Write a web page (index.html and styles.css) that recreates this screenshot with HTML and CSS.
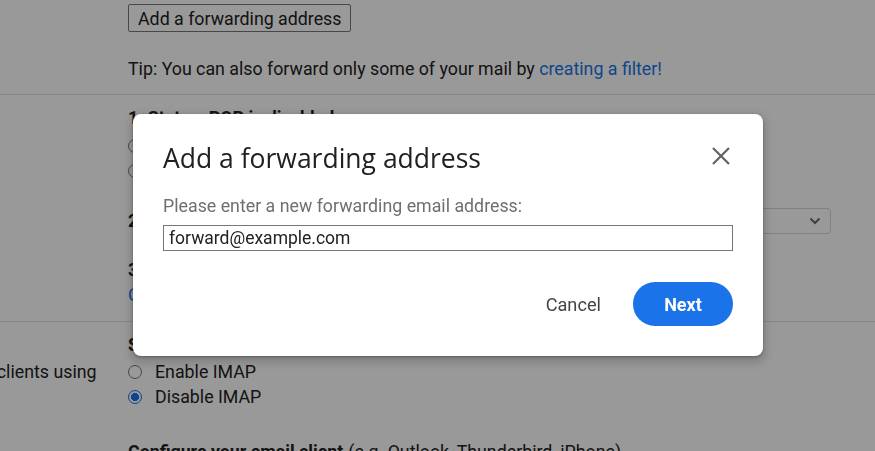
FILE: index.html
```html
<!DOCTYPE html>
<html lang="en">
<head>
  <meta charset="UTF-8">
  <meta name="viewport" content="width=device-width, initial-scale=1.0">
  <title>Forwarding and POP/IMAP</title>
  <link rel="stylesheet" href="styles.css">
</head>
<body>
  <div class="settings">
    <div class="row forward">
      <div class="label"><b>Forwarding:</b></div>
      <div class="value">
        <button class="plain-btn">Add a forwarding address</button>
        <p class="tip">Tip: You can also forward only some of your mail by <a href="#">creating a filter!</a></p>
      </div>
    </div>

    <div class="row pop">
      <div class="label"><b>POP download:</b></div>
      <div class="value">
        <div class="line"><b>1. Status: POP is disabled</b></div>
        <label class="line radio-line first"><span class="radio"></span>Enable POP for all mail</label>
        <label class="line radio-line"><span class="radio"></span>Enable POP for mail that arrives from now on</label>
        <div class="line gap-lg select-line">
          <span><b>2. When messages are accessed with POP</b></span>
          <div class="select">
            <span>keep Gmail's copy in the Inbox</span>
            <svg width="14" height="14" viewBox="0 0 14 14"><path d="M2.5 4.5 7 9l4.5-4.5" fill="none" stroke="#6b6b6b" stroke-width="2"/></svg>
          </div>
        </div>
        <div class="line gap-md"><b>3. Configure your email client</b> (e.g. Outlook, Eudora, Netscape Mail)</div>
        <div class="line"><a href="#">Configuration instructions</a></div>
      </div>
    </div>

    <div class="row imap">
      <div class="label">
        <div class="line"><b>IMAP access:</b></div>
        <div class="line">(access Gmail from other clients using</div>
        <div class="line">IMAP)</div>
      </div>
      <div class="value">
        <div class="line"><b>Status: IMAP is disabled</b></div>
        <label class="line radio-line first"><span class="radio"></span>Enable IMAP</label>
        <label class="line radio-line"><span class="radio checked"></span>Disable IMAP</label>
        <div class="line gap-xl"><b>Configure your email client</b> (e.g. Outlook, Thunderbird, iPhone)</div>
      </div>
    </div>
  </div>

  <div class="scrim"></div>

  <div class="dialog" role="dialog">
    <div class="dialog-head">
      <h2>Add a forwarding address</h2>
      <button class="close" aria-label="Close">
        <svg width="18" height="18" viewBox="0 0 18 18"><path d="M1 1 17 17M17 1 1 17" stroke="#5f6368" stroke-width="2.2"/></svg>
      </button>
    </div>
    <label class="field-label" for="fwd">Please enter a new forwarding email address:</label>
    <input type="text" id="fwd" value="forward@example.com">
    <div class="actions">
      <button class="text-btn">Cancel</button>
      <button class="primary-btn">Next</button>
    </div>
  </div>
</body>
</html>
```

FILE: styles.css
```css
body {
  margin: 0;
  font-family: Roboto, Arial, sans-serif;
  font-size: 17.8px;
  color: #222;
  background-color: #fff;
  overflow: hidden;
}
.settings {
  margin-left: -208px;
  padding-top: 4px;
}
.row {
  display: grid;
  grid-template-columns: 336px 703px;
  border-bottom: 1px solid #e0e0e0;
}
.label {
  white-space: nowrap;
}
.line {
  display: flex;
  align-items: center;
  height: 25px;
  white-space: nowrap;
}
.line b {
  margin-right: 5px;
}
a {
  color: #1a73e8;
  text-decoration: none;
}
.forward {
  padding-bottom: 13px;
}
.forward .label {
  padding-top: 4px;
}
.plain-btn {
  font-family: Roboto, Arial, sans-serif;
  font-size: 17.8px;
  color: #222;
  background-color: #fff;
  border: 1px solid #777;
  border-radius: 2px;
  height: 28px;
  padding: 0 9px;
}
.tip {
  margin: 25px 0 0;
  line-height: 24px;
}
.pop {
  padding-top: 10px;
  padding-bottom: 14px;
}
.radio-line.first {
  margin-top: 3px;
}
.radio {
  width: 14px;
  height: 14px;
  border: 1.5px solid #767676;
  border-radius: 50%;
  margin-right: 13px;
  box-sizing: border-box;
  flex: none;
}
.radio.checked {
  border-color: #1a73e8;
  background: radial-gradient(circle, #1a73e8 0 3.8px, #fff 4.3px);
}
.gap-lg {
  margin-top: 25px;
}
.gap-md {
  margin-top: 24px;
}
.gap-xl {
  margin-top: 30px;
}
.select-line {
  justify-content: space-between;
}
.select {
  display: flex;
  align-items: center;
  justify-content: space-between;
  width: 320px;
  height: 26px;
  box-sizing: border-box;
  padding: 0 8px 0 10px;
  border: 1px solid #d6d6d6;
  border-radius: 4px;
  font-size: 16px;
  color: #444;
}
.imap {
  border-bottom: none;
  padding-top: 10px;
}
.imap .radio-line.first {
  margin-top: 2px;
}
.imap .label {
  padding-top: 2px;
}

.scrim {
  position: fixed;
  inset: 0;
  background-color: rgba(0, 0, 0, 0.4);
}
.dialog {
  position: fixed;
  left: 133px;
  top: 114px;
  width: 630px;
  box-sizing: border-box;
  padding: 28px 30px 30px;
  background-color: #fff;
  border-radius: 8px;
  box-shadow: 0 4px 8px 3px rgba(0,0,0,0.15), 0 1px 3px rgba(0,0,0,0.3);
  display: flex;
  flex-direction: column;
}
.dialog-head {
  display: flex;
  align-items: center;
  justify-content: space-between;
  height: 32px;
}
.dialog-head h2 {
  margin: 0;
  font-family: "Open Sans", Roboto, sans-serif;
  font-weight: 400;
  font-size: 26.5px;
  color: #202124;
}
.close {
  background: none;
  border: none;
  padding: 0;
  margin: -4px 3px 0 0;
  width: 18px;
  height: 18px;
  display: flex;
}
.field-label {
  margin-top: 20px;
  line-height: 24px;
  color: #6f6f6f;
}
input[type="text"] {
  margin-top: 7px;
  height: 26px;
  box-sizing: border-box;
  padding: 0 5px;
  border: 1px solid #767676;
  border-radius: 0;
  font-family: Roboto, Arial, sans-serif;
  font-size: 17.5px;
  color: #222;
}
.actions {
  display: flex;
  justify-content: flex-end;
  align-items: center;
  gap: 16px;
  margin-top: 31px;
}
.text-btn {
  background: none;
  border: none;
  height: 44px;
  padding: 0 16px;
  font-family: Roboto, Arial, sans-serif;
  font-size: 18.2px;
  color: #444;
}
.primary-btn {
  width: 100px;
  height: 44px;
  border: none;
  border-radius: 22px;
  background-color: #1a73e8;
  color: #fff;
  font-family: Roboto, Arial, sans-serif;
  font-size: 18px;
  font-weight: 700;
}
```
